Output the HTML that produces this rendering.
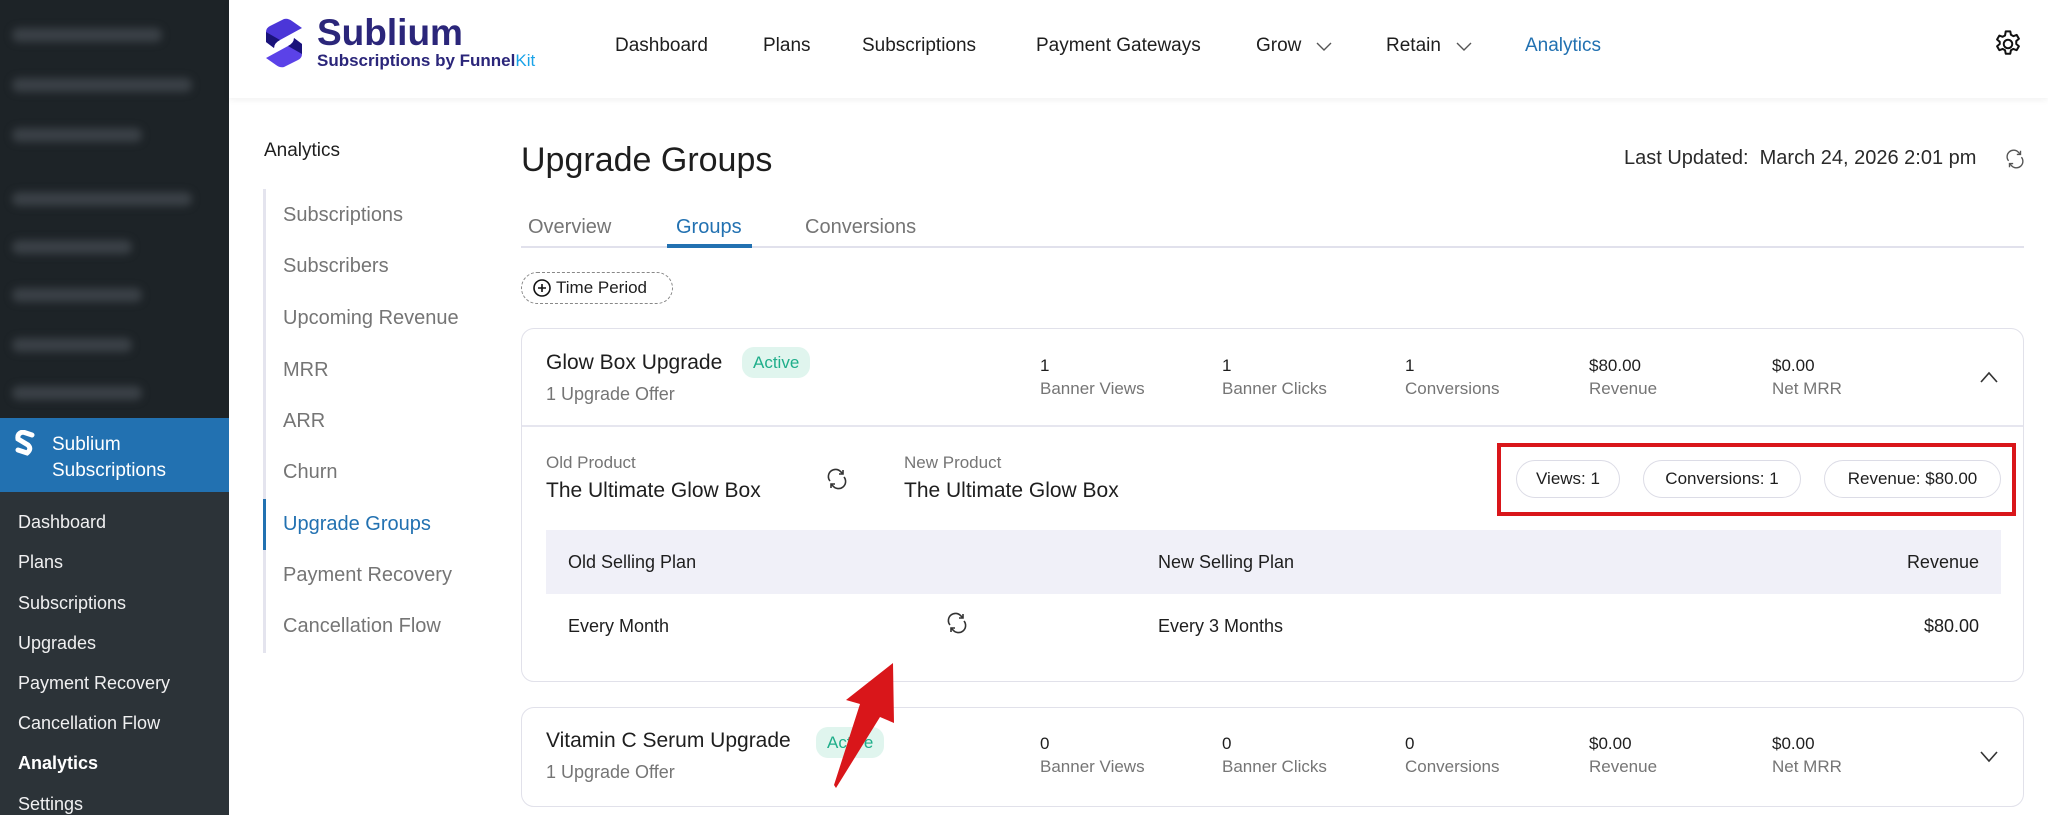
<!DOCTYPE html>
<html><head><meta charset="utf-8"><style>
*{margin:0;padding:0;box-sizing:border-box}
body{width:2048px;height:815px;overflow:hidden;position:relative;background:#fff;font-family:"Liberation Sans",Arial,sans-serif;color:#1e1e1e}
.a{position:absolute;white-space:nowrap}
.wp{left:0;top:0;width:229px;height:815px;background:#2c3338}
.blur{left:0;top:0;width:229px;height:418px;background:#1d2327}
.bl{position:absolute;height:14px;background:#3a4046;border-radius:7px;filter:blur(4px)}
.wpm{color:#f0f0f1;font-size:18px;left:18px}
.hdr{left:229px;top:0;width:1819px;height:98px;background:#fff;box-shadow:0 2px 6px rgba(0,0,0,.06)}
.nav{font-size:19px;top:35px;color:#1e1e1e}
.sub{font-size:20px;color:#757575;left:283px}
.stv{font-size:17px;color:#1e1e1e}
.stl{font-size:17px;color:#757575}
.card{border:1.5px solid #e1e1ea;border-radius:13px;background:#fff}
.pill{border:1.5px solid #dcdce6;border-radius:20px;font-size:17px;height:38px;line-height:35px;text-align:center}
.badge{background:#e0f5ee;color:#1fae8a;font-size:17px;border-radius:12px;height:31px;line-height:31px;padding:0 11px}
</style></head><body>
<div class="a wp"></div>
<div class="a blur">
<div class="bl" style="left:12px;top:28px;width:150px"></div>
<div class="bl" style="left:12px;top:78px;width:180px"></div>
<div class="bl" style="left:12px;top:128px;width:130px"></div>
<div class="bl" style="left:12px;top:192px;width:180px"></div>
<div class="bl" style="left:12px;top:240px;width:120px"></div>
<div class="bl" style="left:12px;top:288px;width:130px"></div>
<div class="bl" style="left:12px;top:338px;width:120px"></div>
<div class="bl" style="left:12px;top:386px;width:130px"></div>
</div>
<div class="a" style="left:0;top:418px;width:229px;height:74px;background:#2271b1"></div>
<svg class="a" style="left:14px;top:430px" width="22" height="26" viewBox="0 0 22 26"><path d="M18 5 L9 2 Q3 3 4 9 L14 15 Q18 19 13 23 L4 20" fill="none" stroke="#fff" stroke-width="5" stroke-linecap="round"/></svg>
<div class="a" style="left:52px;top:432px;font-size:19px;color:#fff;line-height:26px">Sublium<br>Subscriptions</div>
<div class="a wpm" style="top:512px">Dashboard</div>
<div class="a wpm" style="top:552px">Plans</div>
<div class="a wpm" style="top:593px">Subscriptions</div>
<div class="a wpm" style="top:633px">Upgrades</div>
<div class="a wpm" style="top:673px">Payment Recovery</div>
<div class="a wpm" style="top:713px">Cancellation Flow</div>
<div class="a wpm" style="top:753px;color:#fff;font-weight:bold">Analytics</div>
<div class="a wpm" style="top:794px">Settings</div>

<div class="a hdr"></div>
<svg class="a" style="left:262px;top:18px" width="44" height="50" viewBox="0 0 44 50"><path d="M4 14 Q4 10 8 8 L22 1 Q26 0 30 3 L40 10 L18 22 Q12 25 12 30 L4 24 Z" fill="#4b36d8"/><path d="M4 14 L4 24 L12 30 Q12 25 18 22 Z" fill="#1a137a"/><path d="M40 36 Q40 40 36 42 L22 49 Q18 50 14 47 L4 40 L26 28 Q32 25 32 20 L40 26 Z" fill="#5b42e8"/><path d="M40 36 L40 26 L32 20 Q32 25 26 28 Z" fill="#1a137a"/></svg>
<div class="a" style="left:317px;top:12px;font-size:37px;font-weight:bold;color:#2b267a">Sublium</div>
<div class="a" style="left:317px;top:51px;font-size:17px;font-weight:bold;color:#2b267a">Subscriptions by Funnel<span style="color:#1aa3e8;font-weight:normal">Kit</span></div>
<div class="a nav" style="left:615px">Dashboard</div>
<div class="a nav" style="left:763px">Plans</div>
<div class="a nav" style="left:862px">Subscriptions</div>
<div class="a nav" style="left:1036px">Payment Gateways</div>
<div class="a nav" style="left:1256px">Grow</div>
<svg class="a" style="left:1316px;top:42px" width="16" height="10" viewBox="0 0 16 10" fill="none" stroke="#555" stroke-width="1.4"><path d="M1 1l7 7 7-7"/></svg>
<div class="a nav" style="left:1386px">Retain</div>
<svg class="a" style="left:1456px;top:42px" width="16" height="10" viewBox="0 0 16 10" fill="none" stroke="#555" stroke-width="1.4"><path d="M1 1l7 7 7-7"/></svg>
<div class="a nav" style="left:1525px;color:#2271b1">Analytics</div>
<svg class="a" style="left:1992px;top:28px" width="32" height="32" viewBox="0 0 24 24" fill="none" stroke="#111" stroke-width="1.5"><circle cx="12" cy="12" r="3.2"/><path d="M10.3 2.5h3.4l.5 2.6 1.8 1 2.5-.9 1.7 2.9-2 1.7v2.2l2 1.7-1.7 2.9-2.5-.9-1.8 1-.5 2.6h-3.4l-.5-2.6-1.8-1-2.5.9-1.7-2.9 2-1.7V10.3l-2-1.7 1.7-2.9 2.5.9 1.8-1z" stroke-linejoin="round"/></svg>

<div class="a" style="left:264px;top:140px;font-size:19px">Analytics</div>
<div class="a" style="left:263px;top:189px;width:3px;height:464px;background:#e4e4ee"></div>
<div class="a" style="left:263px;top:499px;width:3px;height:51px;background:#2271b1"></div>
<div class="a sub" style="top:204px">Subscriptions</div>
<div class="a sub" style="top:255px">Subscribers</div>
<div class="a sub" style="top:307px">Upcoming Revenue</div>
<div class="a sub" style="top:359px">MRR</div>
<div class="a sub" style="top:410px">ARR</div>
<div class="a sub" style="top:461px">Churn</div>
<div class="a sub" style="top:513px;color:#2271b1">Upgrade Groups</div>
<div class="a sub" style="top:564px">Payment Recovery</div>
<div class="a sub" style="top:615px">Cancellation Flow</div>

<div class="a" style="left:521px;top:141px;font-size:34px;color:#1e1e1e">Upgrade Groups</div>
<div class="a" style="left:1624px;top:147px;font-size:20px;color:#2a2a2a">Last Updated:&nbsp; March 24, 2026 2:01 pm</div>
<svg class="a" style="left:2004px;top:148px" width="22" height="22" viewBox="0 0 24 24" fill="none" stroke="#555" stroke-width="1.5"><path d="M5 14a7 7 0 0 1 11-9l2 2M19 10a7 7 0 0 1-11 9l-2-2"/><path d="M18 3v4h-4M6 21v-4h4"/></svg>
<div class="a" style="left:528px;top:216px;font-size:20px;color:#757575">Overview</div>
<div class="a" style="left:676px;top:216px;font-size:20px;color:#2271b1">Groups</div>
<div class="a" style="left:805px;top:216px;font-size:20px;color:#757575">Conversions</div>
<div class="a" style="left:521px;top:246px;width:1503px;height:2px;background:#e1e1ec"></div>
<div class="a" style="left:667px;top:244px;width:85px;height:4px;background:#2271b1"></div>
<div class="a" style="left:521px;top:272px;width:152px;height:32px;border:1.5px dashed #888;border-radius:16px;font-size:17px;line-height:29px;padding-left:34px">Time Period</div>
<svg class="a" style="left:532px;top:278px" width="20" height="20" viewBox="0 0 20 20" fill="none" stroke="#111" stroke-width="1.6"><circle cx="10" cy="10" r="8"/><path d="M10 6v8M6 10h8"/></svg>

<div class="a card" style="left:521px;top:328px;width:1503px;height:354px"></div>
<div class="a" style="left:522px;top:425px;width:1501px;height:2px;background:#e6e6ef"></div>
<div class="a" style="left:546px;top:351px;font-size:21px">Glow Box Upgrade</div>
<div class="a badge" style="left:742px;top:347px">Active</div>
<div class="a" style="left:546px;top:384px;font-size:18px;color:#757575">1 Upgrade Offer</div>
<div class="a stv" style="left:1040px;top:356px">1</div><div class="a stl" style="left:1040px;top:379px">Banner Views</div>
<div class="a stv" style="left:1222px;top:356px">1</div><div class="a stl" style="left:1222px;top:379px">Banner Clicks</div>
<div class="a stv" style="left:1405px;top:356px">1</div><div class="a stl" style="left:1405px;top:379px">Conversions</div>
<div class="a stv" style="left:1589px;top:356px">$80.00</div><div class="a stl" style="left:1589px;top:379px">Revenue</div>
<div class="a stv" style="left:1772px;top:356px">$0.00</div><div class="a stl" style="left:1772px;top:379px">Net MRR</div>
<svg class="a" style="left:1979px;top:370px" width="20" height="14" viewBox="0 0 20 14" fill="none" stroke="#333" stroke-width="1.6"><path d="M2 12 10 3 18 12"/></svg>

<div class="a" style="left:546px;top:453px;font-size:17px;color:#757575">Old Product</div>
<div class="a" style="left:546px;top:479px;font-size:21px">The Ultimate Glow Box</div>
<svg class="a" style="left:825px;top:467px" width="24" height="24" viewBox="0 0 24 24" fill="none" stroke="#333" stroke-width="1.6"><path d="M5 14a7 7 0 0 1 11-9l2 2M19 10a7 7 0 0 1-11 9l-2-2"/><path d="M18 3v4h-4M6 21v-4h4"/></svg>
<div class="a" style="left:904px;top:453px;font-size:17px;color:#757575">New Product</div>
<div class="a" style="left:904px;top:479px;font-size:21px">The Ultimate Glow Box</div>
<div class="a pill" style="left:1516px;top:460px;width:104px">Views: 1</div>
<div class="a pill" style="left:1643px;top:460px;width:158px">Conversions: 1</div>
<div class="a pill" style="left:1824px;top:460px;width:177px">Revenue: $80.00</div>
<div class="a" style="left:1497px;top:443px;width:519px;height:73px;border:4px solid #d9161a"></div>

<div class="a" style="left:546px;top:530px;width:1455px;height:64px;background:#f0f0f8"></div>
<div class="a" style="left:568px;top:552px;font-size:18px">Old Selling Plan</div>
<div class="a" style="left:1158px;top:552px;font-size:18px">New Selling Plan</div>
<div class="a" style="left:1904px;top:552px;font-size:18px;width:75px;text-align:right">Revenue</div>
<div class="a" style="left:568px;top:616px;font-size:18px">Every Month</div>
<svg class="a" style="left:945px;top:611px" width="24" height="24" viewBox="0 0 24 24" fill="none" stroke="#333" stroke-width="1.6"><path d="M5 14a7 7 0 0 1 11-9l2 2M19 10a7 7 0 0 1-11 9l-2-2"/><path d="M18 3v4h-4M6 21v-4h4"/></svg>
<div class="a" style="left:1158px;top:616px;font-size:18px">Every 3 Months</div>
<div class="a" style="left:1904px;top:616px;font-size:18px;width:75px;text-align:right">$80.00</div>

<div class="a card" style="left:521px;top:707px;width:1503px;height:100px"></div>
<div class="a" style="left:546px;top:729px;font-size:21px">Vitamin C Serum Upgrade</div>
<div class="a badge" style="left:816px;top:727px">Active</div>
<div class="a" style="left:546px;top:762px;font-size:18px;color:#757575">1 Upgrade Offer</div>
<div class="a stv" style="left:1040px;top:734px">0</div><div class="a stl" style="left:1040px;top:757px">Banner Views</div>
<div class="a stv" style="left:1222px;top:734px">0</div><div class="a stl" style="left:1222px;top:757px">Banner Clicks</div>
<div class="a stv" style="left:1405px;top:734px">0</div><div class="a stl" style="left:1405px;top:757px">Conversions</div>
<div class="a stv" style="left:1589px;top:734px">$0.00</div><div class="a stl" style="left:1589px;top:757px">Revenue</div>
<div class="a stv" style="left:1772px;top:734px">$0.00</div><div class="a stl" style="left:1772px;top:757px">Net MRR</div>
<svg class="a" style="left:1979px;top:750px" width="20" height="14" viewBox="0 0 20 14" fill="none" stroke="#333" stroke-width="1.6"><path d="M2 2 10 11 18 2"/></svg>

<svg class="a" style="left:0;top:0" width="2048" height="815"><polygon points="893,663 894,723 880,717 836,788 834,785 860,704 846,700" fill="#d9161a"/></svg>
</body></html>
